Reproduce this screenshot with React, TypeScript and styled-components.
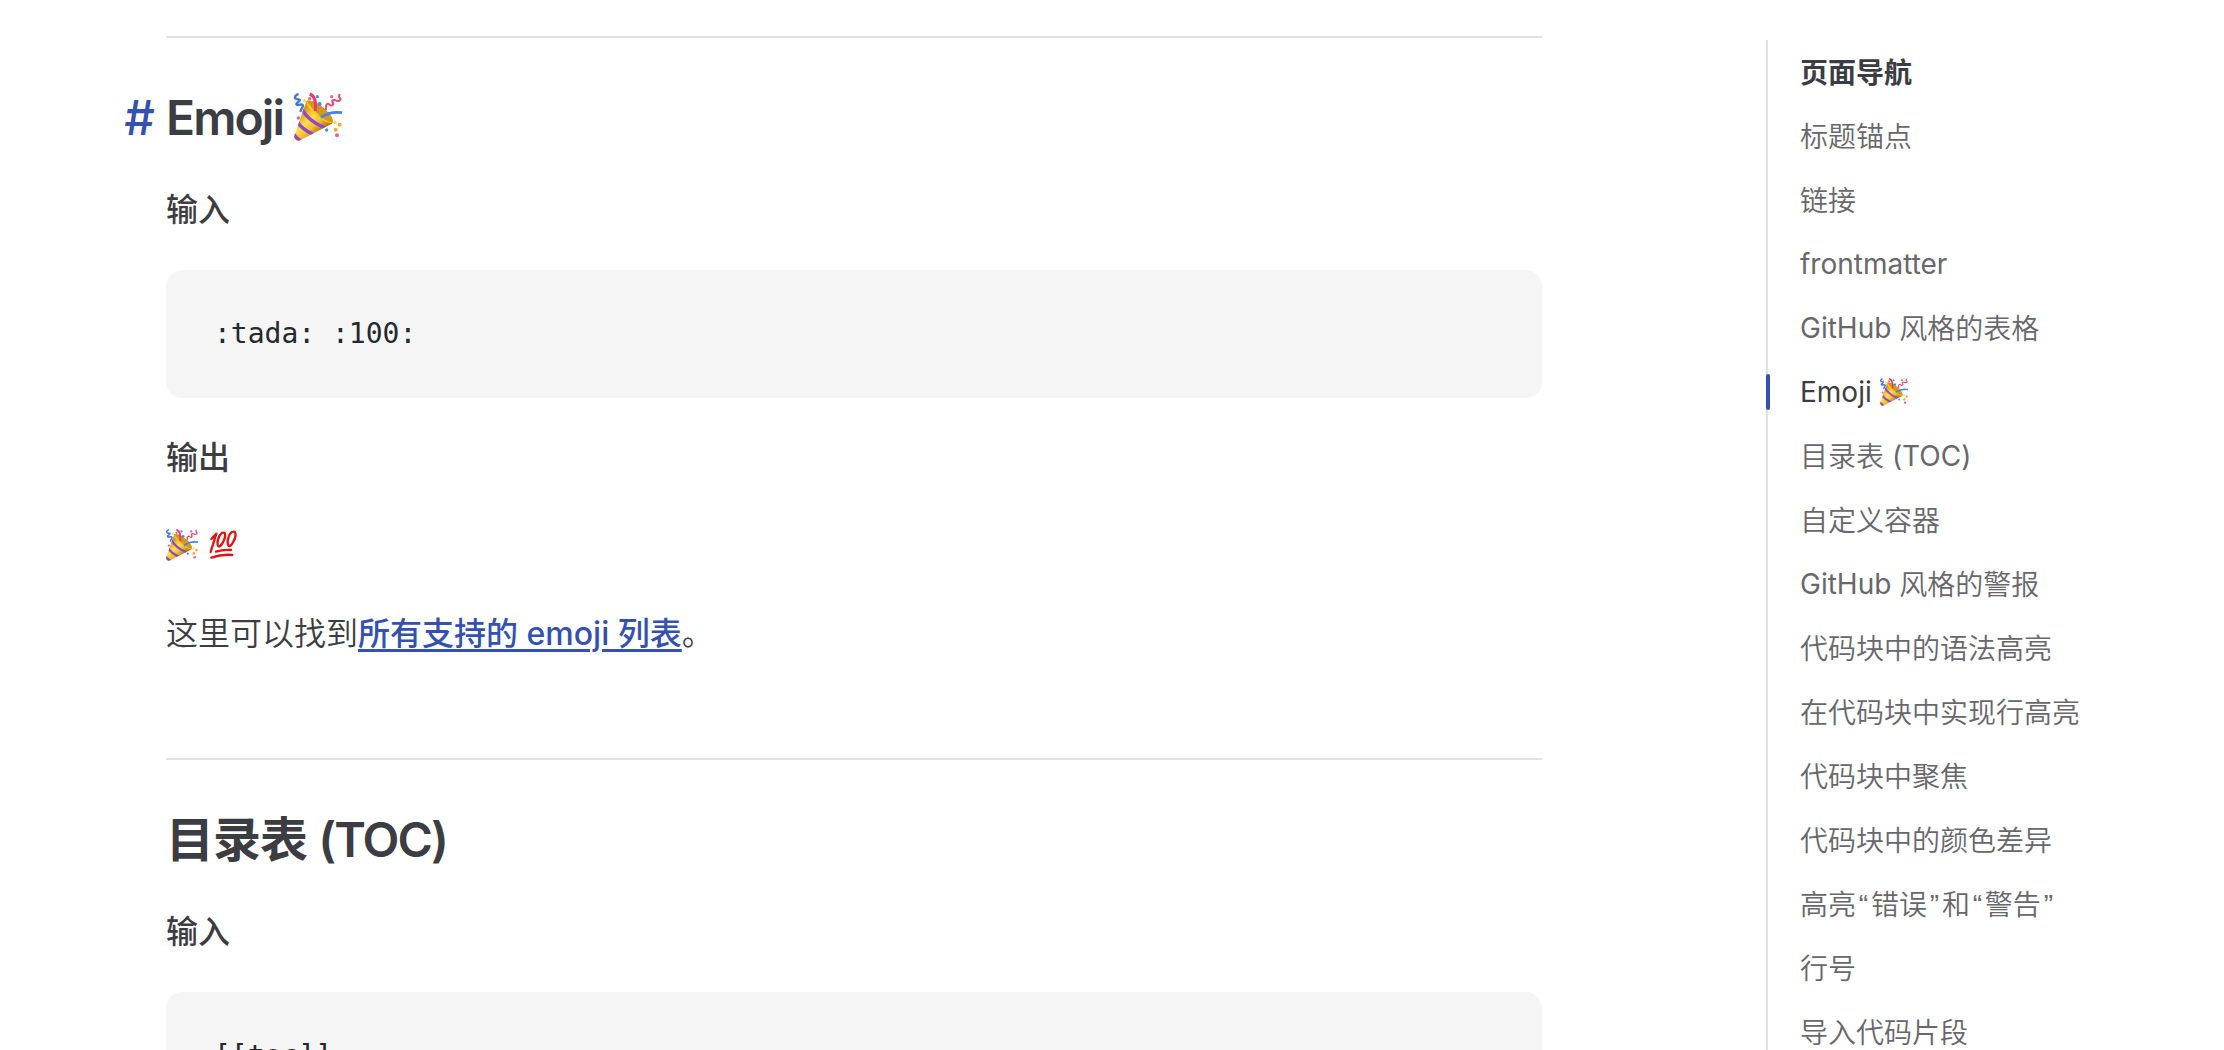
import React from 'react';

import styled, { createGlobalStyle } from 'styled-components'

const GlobalStyle = createGlobalStyle`
  *, *::before, *::after {
    box-sizing: border-box;
  }

  body {
    margin: 0;
    overflow: hidden;
    background: #ffffff;
    color: #3c3c43;
    font-family: Inter, "Noto Sans CJK SC", sans-serif;
    font-size: 32px;
    line-height: 56px;
    font-synthesis: none;
    -webkit-font-smoothing: antialiased;
  }
`;

const Page = styled("div")`
  display: flex;
  height: 1050px;
  padding-left: 166px;
  overflow: hidden;
`;

const Content = styled("main")`
  width: 1376px;
  flex: none;
  padding-top: 36px;
`;

const Section = styled("section")`
  border-top: 2px solid #e2e2e3;
  padding-top: 48px;

  & + & {
    margin-top: 96px;
  }
`;

const Heading = styled("h2")`
  margin: 0;
  font-size: 48px;
  line-height: 64px;
  font-weight: 600;
  letter-spacing: -0.02em;
`;

const HeadingLatin = styled("span")`
  letter-spacing: -0.04em;
`;

const HeaderAnchor = styled("a")`
  float: left;
  margin-left: -0.87em;
  font-weight: 500;
  color: #3451b2;
  text-decoration: none;
`;

const Paragraph = styled("p")`
  margin: 32px 0;
`;

const Strong = styled("strong")`
  font-weight: 500;
`;

const Light = styled("span")`
  font-weight: 350;
`;

const Link = styled("a")`
  color: #3451b2;
  font-weight: 500;
  text-decoration: underline;
  text-decoration-thickness: 3px;
  text-underline-offset: 4px;
`;

const Han = styled("span")<{ $weight?: number }>`
  line-height: 1;
  vertical-align: -1px;
  font-weight: ${({ $weight }) => $weight ?? 'inherit'};
`;

const Quote = styled("span")`
  padding: 0 2.8px;
  font-family: "Liberation Sans", sans-serif;
  line-height: 1;
`;

const CodeBlock = styled("pre")`
  margin: 32px 0;
  padding: 40px 48px;
  border-radius: 16px;
  background: #f5f5f5;
  color: #24292e;
  font-family: "DejaVu Sans Mono", monospace;
  font-size: 28px;
  line-height: 48px;
`;

const Code = styled("code")`
  font-family: inherit;
`;

const Outline = styled("aside")`
  width: 420px;
  flex: none;
  margin: 40px 0 0 224px;
  padding-left: 32px;
  border-left: 2px solid #e2e2e3;
  font-size: 28px;
  line-height: 64px;
`;

const OutlineTitle = styled("div")`
  height: 64px;
  font-weight: 600;
`;

const OutlineList = styled("ul")`
  margin: 0;
  padding: 0;
  list-style: none;
`;

const OutlineItem = styled("li")<{ $active?: boolean }>`
  position: relative;
  height: 64px;
  white-space: nowrap;
  color: ${({ $active }) => ($active ? '#3c3c43' : '#67676c')};

  &::before {
    content: "";
    display: ${({ $active }) => ($active ? 'block' : 'none')};
    position: absolute;
    top: 14px;
    left: -34px;
    width: 4px;
    height: 36px;
    border-radius: 2px;
    background: #3451b2;
  }
`;

const EmojiIcon = styled("svg")`
  display: inline-block;
  width: 1em;
  height: 1em;
  vertical-align: -0.125em;
  overflow: visible;
`;

const Tada: React.FC = () => (
  <EmojiIcon viewBox="0 0 144 144" role="img" aria-label="tada">
    <defs>
      <linearGradient id="cone" x1="22" y1="60" x2="74" y2="118" gradientUnits="userSpaceOnUse">
        <stop offset="0" stopColor="#d99c1c" />
        <stop offset="0.4" stopColor="#ffe14a" />
        <stop offset="0.7" stopColor="#f2bf2c" />
        <stop offset="1" stopColor="#b97a12" />
      </linearGradient>
      <clipPath id="coneClip">
        <path d="M37 24 L1 128 Q-1 144 15 143 L114 92 Q122 78 84 46 Q50 18 37 24 Z" />
      </clipPath>
    </defs>
    <path d="M37 24 L1 128 Q-1 144 15 143 L114 92 Q122 78 84 46 Q50 18 37 24 Z" fill="url(#cone)" />
    <g clipPath="url(#coneClip)" fill="none" stroke="#9147cf" strokeWidth="10">
      <path d="M24 48 Q42 84 92 104" />
      <path d="M10 86 Q24 110 58 124" />
      <path d="M-2 122 Q6 136 22 144" />
    </g>
    <path d="M38 23 C55 20 76 31 96 51 C112 67 122 83 114 90 C104 94 80 80 61 61 C45 44 34 29 38 23 Z" fill="#d99716" />
    <path d="M38 24 C33 36 60 66 85 80 C98 88 108 92 114 89 C101 87 86 77 72 63 C54 46 43 33 38 24 Z" fill="#f3c83a" />
    <path d="M47 3 C64 9 67 27 64 54" fill="none" stroke="#ed3b68" strokeWidth="9" />
    <path d="M81 73 C98 61 116 55 144 59" fill="none" stroke="#4482ed" strokeWidth="8" />
    <g fill="none" strokeLinecap="round" strokeLinejoin="round">
      <path d="M11 4 C-1 10 1 18 11 19 C22 18 18 24 10 29 C3 35 9 37 18 35 C30 33 28 39 23 47 L20 54" stroke="#3e75df" strokeWidth="7" />
      <path d="M96 49 C94 34 100 30 106 34 C114 42 121 34 115 27 C113 20 122 20 128 23 C139 26 143 19 135 12 L136 5" stroke="#e64b74" strokeWidth="6" />
    </g>
    <g fill="#428df0">
      <circle cx="70" cy="11" r="5" />
      <circle cx="77" cy="33" r="6" />
      <circle cx="98" cy="111" r="5" />
    </g>
    <g fill="#ef5d98">
      <circle cx="47" cy="17" r="5" />
      <circle cx="113" cy="11" r="5" />
      <circle cx="13" cy="75" r="5" />
      <circle cx="129" cy="127" r="6" />
    </g>
    <g fill="#f4a54a">
      <circle cx="137" cy="95" r="6" />
      <circle cx="125" cy="110" r="6" />
    </g>
    <circle cx="31" cy="23" r="5" fill="#f5df3b" />
    <circle cx="123" cy="88" r="5" fill="#f5df3b" />
  </EmojiIcon>
);

const Hundred: React.FC = () => (
  <EmojiIcon viewBox="0 0 96 96" role="img" aria-label="100">
    <g fill="none" stroke="#df1111" strokeLinecap="round" strokeLinejoin="round">
      <path d="M13 30 L28 14 L11 69" strokeWidth="7" />
      <path d="M49 11 C38 11 28 39 33 50 C40 62 57 26 54 14 Q53 10 49 11 Z" strokeWidth="7" />
      <path d="M79 8 C67 8 58 38 64 49 C71 60 89 24 85 12 Q84 7 79 8 Z" strokeWidth="7" />
      <path d="M27 68 Q49 61 72 63" strokeWidth="7" />
      <path d="M13 86 Q45 75 76 78" strokeWidth="7" />
    </g>
  </EmojiIcon>
);

interface HanTextProps {
  text: string;
  weight?: number;
}

// Han runs sit slightly lower than the latin ones
const HanText: React.FC<HanTextProps> = ({ text, weight }) => (
  <>
    {text.split(/([\u4e00-\u9fff]+|[“”])/).map((part, index) => {
      if (/[\u4e00-\u9fff]/.test(part)) {
        return <Han key={index} $weight={weight}>{part}</Han>;
      }
      if (/[“”]/.test(part)) {
        return <Quote key={index}>{part}</Quote>;
      }
      return part;
    })}
  </>
);

interface OutlineEntry {
  text: string;
  emoji?: boolean;
  active?: boolean;
}

const outlineItems: OutlineEntry[] = [
  { text: '标题锚点' },
  { text: '链接' },
  { text: 'frontmatter' },
  { text: 'GitHub 风格的表格' },
  { text: 'Emoji ', emoji: true, active: true },
  { text: '目录表 (TOC)' },
  { text: '自定义容器' },
  { text: 'GitHub 风格的警报' },
  { text: '代码块中的语法高亮' },
  { text: '在代码块中实现行高亮' },
  { text: '代码块中聚焦' },
  { text: '代码块中的颜色差异' },
  { text: '高亮“错误”和“警告”' },
  { text: '行号' },
  { text: '导入代码片段' },
];

const App: React.FC = () => {
  return (
    <>
      <GlobalStyle />
      <Page lang="zh-CN">
        <Content>
          <Section>
            <Heading>
              <HeaderAnchor>#</HeaderAnchor>
              <HeadingLatin>Emoji</HeadingLatin> <Tada />
            </Heading>
            <Paragraph><Strong>输入</Strong></Paragraph>
            <CodeBlock><Code>:tada: :100:</Code></CodeBlock>
            <Paragraph><Strong>输出</Strong></Paragraph>
            <Paragraph><Tada /> <Hundred /></Paragraph>
            <Paragraph>
              <Light>这里可以找到</Light><Link>所有支持的 emoji 列表</Link><Light>。</Light>
            </Paragraph>
          </Section>
          <Section>
            <Heading>目录表 <HeadingLatin>(TOC)</HeadingLatin></Heading>
            <Paragraph><Strong>输入</Strong></Paragraph>
            <CodeBlock><Code>[[toc]]</Code></CodeBlock>
          </Section>
        </Content>
        <Outline>
          <OutlineTitle><HanText text="页面导航" /></OutlineTitle>
          <OutlineList>
            {outlineItems.map((item, index) => (
              <OutlineItem key={index} $active={item.active}>
                <HanText text={item.text} weight={350} />
                {item.emoji && <Tada />}
              </OutlineItem>
            ))}
          </OutlineList>
        </Outline>
      </Page>
    </>
  );
};

export default App;
